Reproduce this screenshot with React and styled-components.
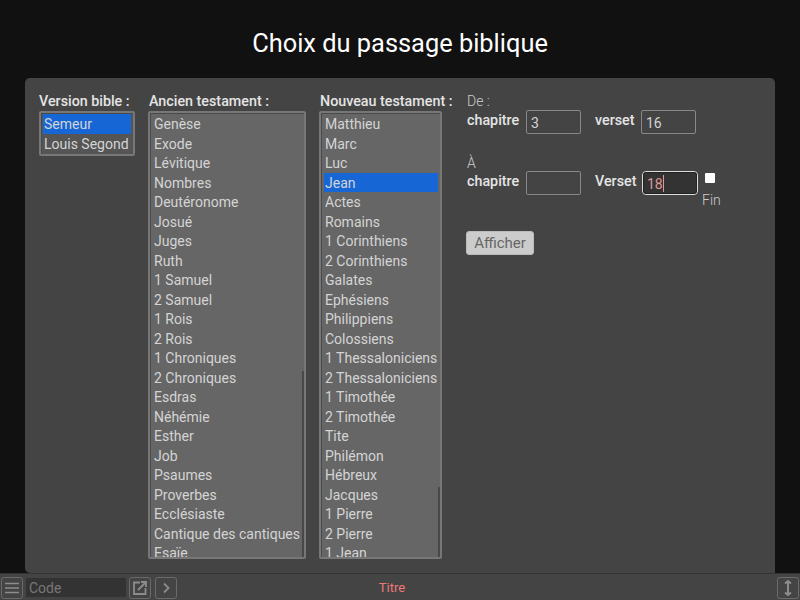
import React from 'react';
import styled, { createGlobalStyle } from 'styled-components';

const GlobalStyle = createGlobalStyle`
  html, body {
    margin: 0;
    height: 100%;
    background: #111;
    font-family: Roboto, "Liberation Sans", sans-serif;
    overflow: hidden;
  }
`;

const Page = styled.div`
  width: 800px;
  height: 600px;
  display: flex;
  flex-direction: column;
`;

const Title = styled.h1`
  margin: 0;
  height: 78px;
  box-sizing: border-box;
  padding-top: 28px;
  text-align: center;
  color: #fff;
  font-size: 25.4px;
  line-height: 30px;
  font-weight: 400;
`;

const Panel = styled.main`
  width: 750px;
  height: 495px;
  margin-left: 25px;
  box-sizing: border-box;
  padding: 15px 14px 0;
  background: #444;
  border-radius: 5px 5px 0 5px;
  display: flex;
  align-items: flex-start;
`;

const Column = styled.section`
  width: ${({ $width }) => $width}px;
  flex: none;
`;

const Heading = styled.div`
  height: 18px;
  padding-left: ${({ $indent }) => $indent || 0}px;
  color: #e4e4e4;
  font-size: 14.3px;
  line-height: 17px;
  font-weight: 500;
  white-space: nowrap;
`;

const ListBox = styled.div`
  position: relative;
  box-sizing: border-box;
  width: ${({ $width }) => $width}px;
  height: ${({ $height }) => $height}px;
  padding: 1px 2px 0 ${({ $pad }) => $pad}px;
  border: 2px solid #777;
  border-radius: 2px;
  background: ${({ $dark }) => ($dark ? '#555' : '#666')};
  box-shadow: inset 1px 1px 0 #4a4a4a;
  overflow: hidden;
`;

const Option = styled.div`
  height: 19.5px;
  padding: 1px 0 0 1px;
  width: ${({ $width }) => $width}px;
  box-sizing: border-box;
  color: #d4d4d4;
  background: ${({ $selected }) => ($selected ? '#1766d6' : 'transparent')};
  font-size: 14px;
  line-height: 19.5px;
  white-space: nowrap;
`;

const ScrollThumb = styled.div`
  position: absolute;
  right: 0;
  bottom: 0;
  width: 2px;
  height: ${({ $height }) => $height}px;
  background: #484848;
`;

const Form = styled.section`
  flex: 1;
  color: #ddd;
  font-size: 14px;
`;

const RangeLabel = styled.div`
  height: 16px;
  padding-left: 1px;
  margin-top: ${({ $top }) => $top || 0}px;
  line-height: 16px;
  color: #ccc;
  font-weight: 300;
`;

const FieldRow = styled.div`
  display: flex;
  align-items: flex-start;
  margin-top: ${({ $top }) => $top || 0}px;
`;

const FieldLabel = styled.label`
  width: ${({ $width }) => $width}px;
  flex: none;
  box-sizing: border-box;
  padding: 2px 0 0 ${({ $indent }) => $indent || 0}px;
  color: #e4e4e4;
  font-size: 14.3px;
  font-weight: 500;
  line-height: 17px;
`;

const NumberBox = styled.input`
  display: block;
  box-sizing: border-box;
  width: ${({ $focused }) => ($focused ? 56 : 55)}px;
  height: 24px;
  padding: 2px 4px 0;
  border: 1px solid ${({ $focused }) => ($focused ? '#ddd' : '#888')};
  border-radius: ${({ $focused }) => ($focused ? 4 : 2)}px;
  outline: ${({ $focused }) => ($focused ? '1px solid #222' : 'none')};
  outline-offset: -2px;
  background: ${({ $focused }) => ($focused ? '#333' : '#444')};
  color: ${({ $focused }) => ($focused ? '#d99' : '#d4d4d4')};
  font-family: inherit;
  font-size: 14px;
`;

const FocusWrap = styled.div`
  position: relative;
  flex: none;
`;

const Caret = styled.span`
  position: absolute;
  left: 21px;
  top: 4px;
  width: 1px;
  height: 17px;
  background: #d99;
`;

const Spacer = styled.div`
  width: 14px;
  flex: none;
`;

const FinBlock = styled.div`
  margin-left: 4px;
  width: 24px;
  color: #ccc;
  font-weight: 300;
  line-height: 16px;
`;

const CheckMark = styled.span`
  display: block;
  width: 10px;
  height: 10px;
  margin: 2px 0 9px 3px;
  background: #fff;
  border-radius: 1px;
`;

const SubmitButton = styled.button`
  display: block;
  width: 68px;
  height: 24px;
  margin-top: 23px;
  padding: 0;
  border: 1px solid #bbb;
  border-radius: 3px;
  background: #ccc;
  color: #666;
  font-family: inherit;
  font-size: 15px;
`;

const Footer = styled.footer`
  height: 27px;
  box-sizing: border-box;
  border-top: 1px solid #333;
  background: #444;
  display: flex;
  align-items: center;
  padding: 1px 1px 0;
`;

const IconButton = styled.button`
  width: 22px;
  height: 22px;
  flex: none;
  margin-left: ${({ $left }) => $left || 0}px;
  padding: 0;
  display: flex;
  align-items: center;
  justify-content: center;
  box-sizing: border-box;
  background: transparent;
  border: 1px solid #6a6a6a;
  border-radius: 3px;
  color: #8c8c8c;
`;

const CodeInput = styled.div`
  width: 97px;
  height: 19px;
  margin-left: 3px;
  padding-left: 3px;
  flex: none;
  background: #333;
  color: #777;
  font-size: 14px;
  line-height: 20px;
`;

const FooterTitle = styled.div`
  flex: 1;
  text-align: center;
  color: #f07878;
  font-size: 13px;
  padding-right: 170px;
`;

const oldTestament = ['Genèse', 'Exode', 'Lévitique', 'Nombres', 'Deutéronome', 'Josué', 'Juges', 'Ruth', '1 Samuel', '2 Samuel', '1 Rois', '2 Rois', '1 Chroniques', '2 Chroniques', 'Esdras', 'Néhémie', 'Esther', 'Job', 'Psaumes', 'Proverbes', 'Ecclésiaste', 'Cantique des cantiques', 'Esaïe'];
const newTestament = ['Matthieu', 'Marc', 'Luc', 'Jean', 'Actes', 'Romains', '1 Corinthiens', '2 Corinthiens', 'Galates', 'Ephésiens', 'Philippiens', 'Colossiens', '1 Thessaloniciens', '2 Thessaloniciens', '1 Timothée', '2 Timothée', 'Tite', 'Philémon', 'Hébreux', 'Jacques', '1 Pierre', '2 Pierre', '1 Jean'];

const App = () => (
  <Page>
    <GlobalStyle />
    <Title>Choix du passage biblique</Title>
    <Panel>
      <Column $width={109}>
        <Heading>Version bible :</Heading>
        <ListBox $width={96} $height={45} $pad={2} $dark>
          <Option $selected $width={88}>Semeur</Option>
          <Option $width={88}>Louis Segond</Option>
        </ListBox>
      </Column>
      <Column $width={171}>
        <Heading $indent={1}>Ancien testament :</Heading>
        <ListBox $width={158} $height={448} $pad={3}>
          {oldTestament.map((name) => <Option key={name} $width={149}>{name}</Option>)}
          <ScrollThumb $height={186} />
        </ListBox>
      </Column>
      <Column $width={147}>
        <Heading $indent={1}>Nouveau testament :</Heading>
        <ListBox $width={123} $height={448} $pad={3}>
          {newTestament.map((name) => <Option key={name} $width={114} $selected={name === 'Jean'}>{name}</Option>)}
          <ScrollThumb $height={70} />
        </ListBox>
      </Column>
      <Form>
        <RangeLabel>De :</RangeLabel>
        <FieldRow $top={1}>
          <FieldLabel $width={60} $indent={1}>chapitre</FieldLabel>
          <NumberBox defaultValue="3" />
          <Spacer />
          <FieldLabel $width={46}>verset</FieldLabel>
          <NumberBox defaultValue="16" />
        </FieldRow>
        <RangeLabel $top={21}>À</RangeLabel>
        <FieldRow>
          <FieldLabel $width={60} $indent={1}>chapitre</FieldLabel>
          <NumberBox />
          <Spacer />
          <FieldLabel $width={47}>Verset</FieldLabel>
          <FocusWrap>
            <NumberBox $focused defaultValue="18" />
            <Caret />
          </FocusWrap>
          <FinBlock>
            <CheckMark />
            Fin
          </FinBlock>
        </FieldRow>
        <SubmitButton>Afficher</SubmitButton>
      </Form>
    </Panel>
    <Footer>
      <IconButton>
        <svg width="16" height="14" viewBox="0 0 16 14" fill="none" stroke="currentColor" strokeWidth="1.6"><path d="M1 2.500h14M1 7h14M1 11.500h14" /></svg>
      </IconButton>
      <CodeInput>Code</CodeInput>
      <IconButton $left={3}>
        <svg width="16" height="16" viewBox="0 0 16 16" fill="none" stroke="currentColor" strokeWidth="1.8"><path d="M8 2.500H2v11.500h11.500V8" /><path d="M6 10l7.500-7.500M9 2h5v5" /></svg>
      </IconButton>
      <IconButton $left={4}>
        <svg width="12" height="12" viewBox="0 0 12 12" fill="none" stroke="currentColor" strokeWidth="1.8"><path d="M4 1.500 8.500 6 4 10.500" /></svg>
      </IconButton>
      <FooterTitle>Titre</FooterTitle>
      <IconButton>
        <svg width="12" height="18" viewBox="0 0 12 18" fill="none" stroke="currentColor" strokeWidth="2"><path d="M6 2v14M3 4.500 6 2l3 2.500M3 13.500 6 16l3-2.500" /></svg>
      </IconButton>
    </Footer>
  </Page>
);

export default App;
